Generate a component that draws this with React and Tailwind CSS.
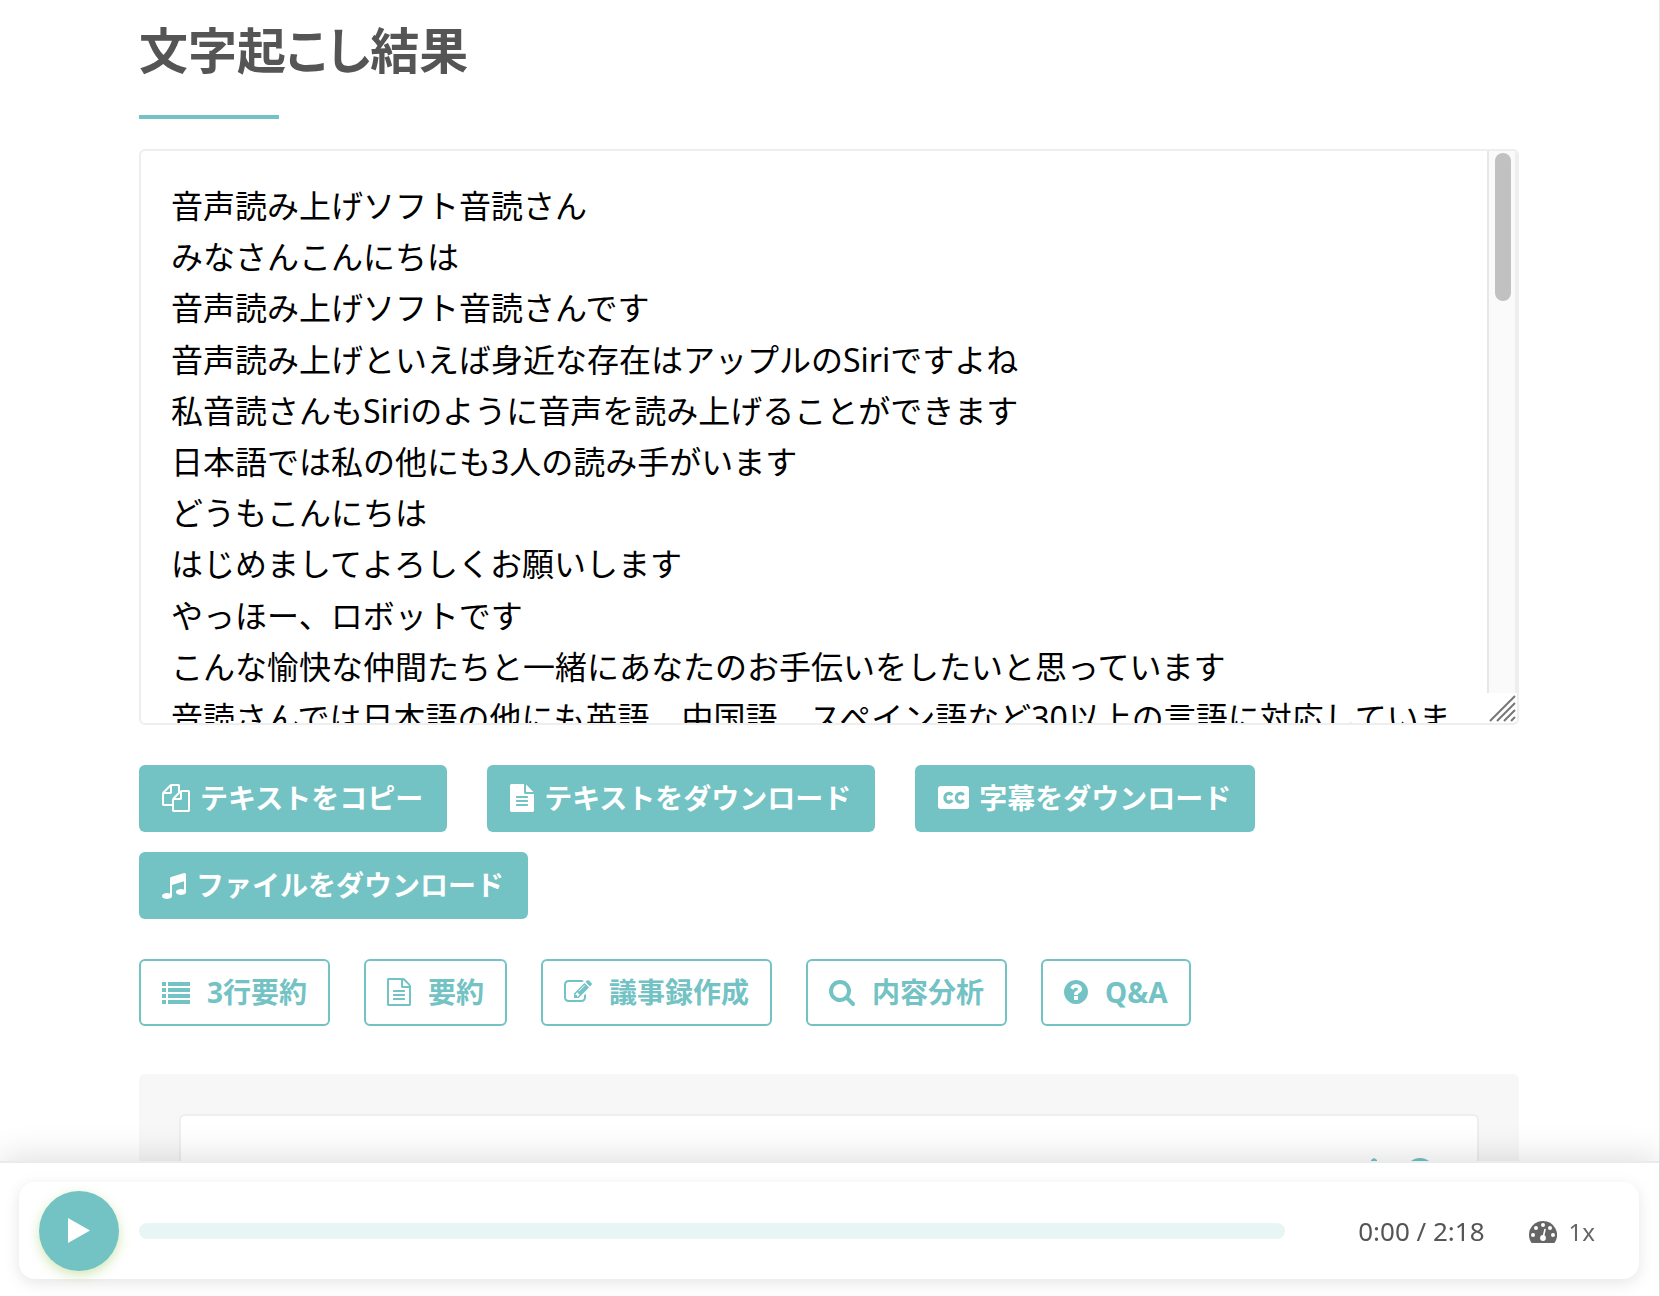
import React from "react";

const transcript = [
  "音声読み上げソフト音読さん",
  "みなさんこんにちは",
  "音声読み上げソフト音読さんです",
  "音声読み上げといえば身近な存在はアップルのSiriですよね",
  "私音読さんもSiriのように音声を読み上げることができます",
  "日本語では私の他にも3人の読み手がいます",
  "どうもこんにちは",
  "はじめましてよろしくお願いします",
  "やっほー、ロボットです",
  "こんな愉快な仲間たちと一緒にあなたのお手伝いをしたいと思っています",
  "音読さんでは日本語の他にも英語、中国語、スペイン語など30以上の言語に対応しています",
].join("\n");

/* Icons share a 64-units-per-pixel grid, so a 1792-unit height is 28px. */
function Glyph({ d, box = "0 0 1792 1792", className = "w-7" }) {
  return (
    <svg viewBox={box} className={`h-7 shrink-0 fill-current ${className}`} aria-hidden="true">
      <path d={d} />
    </svg>
  );
}

const paths = {
  copy: "M1696 384q40 0 68 28t28 68v1216q0 40-28 68t-68 28h-960q-40 0-68-28t-28-68v-288h-544q-40 0-68-28t-28-68v-672q0-40 20-88t48-76l408-408q28-28 76-48t88-20h416q40 0 68 28t28 68v328q68-40 128-40h416zm-544 213l-299 299h299v-299zm-640-384l-299 299h299v-299zm196 647l316-316v-416h-384v416q0 40-28 68t-68 28h-416v640h512v-256q0-40 20-88t48-76zm956 804v-1152h-384v416q0 40-28 68t-68 28h-416v640h896z",
  file: "M1596 476q14 14 28 36h-472v-472q22 14 36 28zm-476 164h544v1056q0 40-28 68t-68 28h-1344q-40 0-68-28t-28-68v-1600q0-40 28-68t68-28h800v544q0 40 28 68t68 28zm160 736v-64q0-14-9-23t-23-9h-704q-14 0-23 9t-9 23v64q0 14 9 23t23 9h704q14 0 23-9t9-23zm0-256v-64q0-14-9-23t-23-9h-704q-14 0-23 9t-9 23v64q0 14 9 23t23 9h704q14 0 23-9t9-23zm0-256v-64q0-14-9-23t-23-9h-704q-14 0-23 9t-9 23v64q0 14 9 23t23 9h704q14 0 23-9t9-23z",
  music: "M1664 224v1120q0 50-34 89t-86 60.5-103.5 32-96.5 10.5-96.5-10.5-103.5-32-86-60.5-34-89 34-89 86-60.5 103.5-32 96.5-10.5q105 0 192 39v-537l-768 237v709q0 50-34 89t-86 60.5-103.5 32-96.5 10.5-96.5-10.5-103.5-32-86-60.5-34-89 34-89 86-60.5 103.5-32 96.5-10.5q105 0 192 39v-967q0-31 19-56.5t49-35.5l832-256q12-4 28-4 40 0 68 28t28 68z",
  list: "M0 256h256v256h-256zM0 640h256v256h-256zM0 1024h256v256h-256zM0 1408h256v256h-256zM384 256h1408v256h-1408zM384 640h1408v256h-1408zM384 1024h1408v256h-1408zM384 1408h1408v256h-1408z",
  fileOutline: "M1596 380q28 28 48 76t20 88v1152q0 40-28 68t-68 28h-1344q-40 0-68-28t-28-68v-1600q0-40 28-68t68-28h896q40 0 88 20t76 48zm-444-244v376h376q-10-29-22-41l-313-313q-12-12-41-22zm384 1528v-1024h-416q-40 0-68-28t-28-68v-416h-768v1536h1280zm-1024-864q0-14 9-23t23-9h704q14 0 23 9t9 23v64q0 14-9 23t-23 9h-704q-14 0-23-9t-9-23v-64zm736 224q14 0 23 9t9 23v64q0 14-9 23t-23 9h-704q-14 0-23-9t-9-23v-64q0-14 9-23t23-9h704zm0 256q14 0 23 9t9 23v64q0 14-9 23t-23 9h-704q-14 0-23-9t-9-23v-64q0-14 9-23t23-9h704z",
  edit: "M888 1184l116-116-152-152-116 116v56h96v96h56zm440-720q-16-16-33 1l-350 350q-17 17-1 33t33-1l350-350q17-17 1-33zm80 594v190q0 119-84.5 203.5t-203.5 84.5h-832q-119 0-203.5-84.5t-84.5-203.5v-832q0-119 84.5-203.5t203.5-84.5h832q63 0 117 25 15 7 18 23 3 17-9 29l-49 49q-14 14-32 8-23-6-45-6h-832q-66 0-113 47t-47 113v832q0 66 47 113t113 47h832q66 0 113-47t47-113v-126q0-13 9-22l64-64q15-15 35-7t20 29zm-96-738l288 288-672 672h-288v-288zm444 132l-92 92-288-288 92-92q28-28 68-28t68 28l152 152q28 28 28 68t-28 68z",
  search: "M1216 832q0-185-131.5-316.5t-316.5-131.5-316.5 131.5-131.5 316.5 131.5 316.5 316.5 131.5 316.5-131.5 131.5-316.5zm512 832q0 52-38 90t-90 38q-54 0-90-38l-343-342q-179 124-399 124-143 0-273.5-55.5t-225-150-150-225-55.5-273.5 55.5-273.5 150-225 225-150 273.5-55.5 273.5 55.5 225 150 150 225 55.5 273.5q0 220-124 399l343 343q37 37 37 90z",
  question: "M1024 1376v-192q0-14-9-23t-23-9h-192q-14 0-23 9t-9 23v192q0 14 9 23t23 9h192q14 0 23-9t9-23zm256-672q0-88-55.5-163t-138.5-116-170-41q-243 0-371 213-15 24 8 42l132 100q7 6 19 6 16 0 25-12 53-68 86-92 34-24 86-24 48 0 85.5 26t37.5 59q0 38-20 61t-68 45q-63 28-115.5 86.5t-52.5 125.5v36q0 14 9 23t23 9h192q14 0 23-9t9-23q0-19 21.5-49.5t54.5-49.5q32-18 49-28.5t46-35 44.5-48 28-60.5 12.5-81zm384 192q0 209-103 385.5t-279.5 279.5-385.5 103-385.5-103-279.5-279.5-103-385.5 103-385.5 279.5-279.5 385.5-103 385.5 103 279.5 279.5 103 385.5z",
};

function CaptionIcon() {
  return (
    <svg viewBox="0 0 31 28" className="h-7 w-[31px] shrink-0" aria-hidden="true">
      <rect x="0" y="2" width="31" height="23" rx="3" fill="currentColor" />
      <g fill="none" stroke="#73c2c4" strokeWidth="3.2">
        <path d="M14.200 11.200a4 4.400 0 1 0 0 5" />
        <path d="M25.600 11.200a4 4.400 0 1 0 0 5" />
      </g>
    </svg>
  );
}

function GaugeIcon() {
  return (
    <svg viewBox="0 0 28 24" className="h-6 w-7" aria-hidden="true">
      <path d="M14 1a14 14 0 0 0-14 14c0 2.700.8 5.300 2.200 7.500.2.300.5.500.8.500h22c.3 0 .6-.2.800-.5A14 14 0 0 0 14 1z" fill="#666" />
      <g fill="#fff">
        <circle cx="4" cy="15" r="2" />
        <circle cx="7" cy="8" r="2" />
        <circle cx="14" cy="5" r="2" />
        <circle cx="21" cy="8" r="2" />
        <circle cx="24" cy="15" r="2" />
        <circle cx="14" cy="18" r="2.900" />
      </g>
      <path d="M14 18l2-8.500" stroke="#fff" strokeWidth="1.600" strokeLinecap="round" />
    </svg>
  );
}

const solidButtons = [
  ["テキストをコピー", <Glyph key="i" d={paths.copy} />],
  ["テキストをダウンロード", <Glyph key="i" d={paths.file} box="128 0 1536 1792" className="w-6" />],
  ["字幕をダウンロード", <CaptionIcon key="i" />],
  ["ファイルをダウンロード", <Glyph key="i" d={paths.music} box="128 0 1536 1792" className="w-6" />],
];

const outlineButtons = [
  ["3行要約", <Glyph key="i" d={paths.list} />],
  ["要約", <Glyph key="i" d={paths.fileOutline} box="128 0 1536 1792" className="w-6" />],
  ["議事録作成", <Glyph key="i" d={paths.edit} />],
  ["内容分析", <Glyph key="i" d={paths.search} box="64 0 1664 1792" className="w-[26px]" />],
  ["Q&A", <Glyph key="i" d={paths.question} box="128 0 1536 1792" className="w-6" />],
];

export default function App() {
  return (
    <div className="h-screen overflow-hidden border-r border-[#e5e5e5] bg-white font-['Noto_Sans','Noto_Sans_CJK_JP',sans-serif]">
      <main className="flex flex-col pl-[139px] pr-[140px]">
        <h1 className="mt-4 text-[49px] leading-[68px] font-bold text-[#555] [font-feature-settings:'palt']">
          <label htmlFor="transcript">文字起こし結果</label>
        </h1>
        <div className="mt-[31px] h-1 w-[140px] bg-[#73c2c4]" />

        <div className="mt-[30px] flex h-[576px] overflow-hidden rounded-md border-2 border-[#eee]">
          <textarea
            id="transcript"
            defaultValue={transcript}
            className="h-full min-w-0 flex-1 resize-none pt-[29px] pr-6 pl-[30px] text-[32px] leading-[1.6] text-black outline-none [scrollbar-width:none]"
          />
          <div className="flex w-[30px] flex-col" aria-hidden="true">
            <div className="flex-1 border-r-2 border-l-2 border-r-[#eee] border-l-[#e7e7e7] bg-[#fafafa] pt-0.5 pl-1.5">
              <div className="h-[148px] w-4 rounded-full bg-[#c1c1c1]" />
            </div>
            <svg viewBox="0 0 30 30" className="size-[30px]" fill="none" stroke="#777" strokeWidth="2">
              <path d="M3 28L28 3M10 28L28 10M17 28L28 17M24 28L28 24" />
            </svg>
          </div>
        </div>

        <div className="mt-10 flex flex-wrap gap-x-10 gap-y-5">
          {solidButtons.map(([label, icon]) => (
            <button
              key={label}
              className="flex h-[67px] items-center gap-2.5 rounded-md bg-[#73c2c4] pr-6 pb-0.5 pl-[23px] text-[28px] font-bold whitespace-nowrap text-white"
            >
              {icon}
              {label}
            </button>
          ))}
        </div>

        <div className="mt-10 flex flex-wrap gap-x-[34px] gap-y-5">
          {outlineButtons.map(([label, icon]) => (
            <button
              key={label}
              className="flex h-[67px] items-center gap-[17px] rounded-md border-2 border-[#73c2c4] px-[21px] pb-0.5 text-[28px] font-bold whitespace-nowrap text-[#73c2c4]"
            >
              {icon}
              {label}
            </button>
          ))}
        </div>

        <section className="mt-12 rounded-md bg-[#f7f7f7] p-10">
          <div className="flex h-60 items-start justify-end gap-[18px] rounded-md border-2 border-[#eee] bg-white pt-[42px] pr-[43px] text-[#73c2c4]">
            <button aria-label="編集">
              <svg viewBox="0 0 28 28" className="size-7 fill-current" aria-hidden="true">
                <path d="M14 0l3 2v8h9v15H2V10h9V2z" />
              </svg>
            </button>
            <button aria-label="ヘルプ">
              <svg viewBox="0 0 28 28" className="size-7 fill-current" aria-hidden="true">
                <circle cx="14" cy="14" r="14" />
              </svg>
            </button>
          </div>
        </section>
      </main>

      <footer className="fixed right-px bottom-0 left-0 border-t-2 border-[#e9ecef] bg-white pt-[19px] pr-5 pb-[17px] pl-[19px] shadow-[0_-4px_32px_rgba(0,0,0,0.13)]">
        <div className="flex h-[97px] items-center rounded-2xl bg-white pr-11 pl-5 shadow-[0_4px_16px_rgba(0,0,0,0.1)]">
          <button
            aria-label="再生"
            className="flex size-20 shrink-0 items-center justify-center rounded-full bg-[#73c2c4] shadow-[0_4px_12px_rgba(139,195,74,0.4)]"
          >
            <svg viewBox="0 0 22 25" className="h-[25px] w-[22px] fill-white" aria-hidden="true">
              <path d="M0 0l22 12.500L0 25z" />
            </svg>
          </button>
          <div className="ml-5 h-4 flex-1 rounded-full bg-[#e8f5f5]" role="progressbar" aria-label="再生位置" aria-valuenow={0} />
          <span className="ml-[73px] pt-0.5 text-[26px] text-[#555]">0:00 / 2:18</span>
          <button className="ml-11 flex items-center gap-3 pt-0.5 text-2xl text-[#666]">
            <GaugeIcon />
            1x
          </button>
        </div>
      </footer>
    </div>
  );
}
